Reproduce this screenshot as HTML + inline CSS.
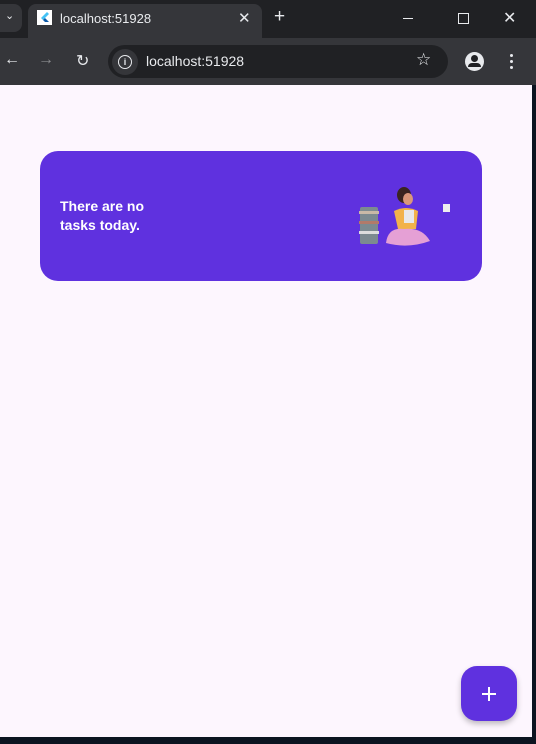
<!DOCTYPE html>
<html><head><style>
body{margin:0;width:536px;height:744px;background:#0c1420;position:relative;overflow:hidden;font-family:"Liberation Sans",sans-serif}
.tabbar{position:absolute;left:0;top:0;width:536px;height:38px;background:#202124}
.tab{position:absolute;left:28px;top:4px;width:234px;height:34px;background:#35363a;border-radius:8px 8px 0 0}
.toolbar{position:absolute;left:0;top:38px;width:536px;height:47px;background:#35363a}
.omni{position:absolute;left:108px;top:45px;width:340px;height:33px;background:#202124;border-radius:17px}
.page{position:absolute;left:0;top:85px;width:532px;height:652px;background:#fdf6fe}
.card{position:absolute;left:40px;top:151px;width:442px;height:130px;background:#5f31df;border-radius:18px}
.card p{position:absolute;left:20px;top:46px;margin:0;color:#fff;font-weight:bold;font-size:14px;line-height:19px}
.fab{position:absolute;left:461px;top:666px;width:56px;height:55px;background:#5f31df;border-radius:16px;box-shadow:0 3px 6px rgba(0,0,0,.25)}
.t{position:absolute;color:#e8eaed;font-size:13px}
</style></head><body>
<div class="tabbar"></div>
<div style="position:absolute;left:0;top:4px;width:22px;height:28px;background:#35363a;border-radius:0 8px 8px 0"></div>
<div class="t" style="left:5px;top:9px;font-size:11px">⌄</div>
<div class="tab"></div>
<div style="position:absolute;left:37px;top:10px;width:15px;height:15px;background:#fff"></div>
<svg style="position:absolute;left:38px;top:11px" width="13" height="13"><path d="M9 1 L3 7 L5 9 L11 3Z" fill="#44c2f5"/><path d="M5 9 L7 11 L11 11 L7 7Z" fill="#0d5aa7"/></svg>
<div class="t" style="left:60px;top:11px">localhost:51928</div>
<div class="t" style="left:238px;top:9px;font-size:15px">✕</div>
<div class="t" style="left:274px;top:6px;font-size:19px">+</div>
<div style="position:absolute;left:403px;top:18px;width:10px;height:1px;background:#e8eaed"></div>
<div style="position:absolute;left:458px;top:13px;width:9px;height:9px;border:1px solid #e8eaed"></div>
<div class="t" style="left:503px;top:8px;font-size:16px">✕</div>
<div class="toolbar"></div>
<div class="t" style="left:4px;top:51px;font-size:16px">←</div>
<div class="t" style="left:38px;top:51px;font-size:16px;color:#8a8b8e">→</div>
<div class="t" style="left:76px;top:51px;font-size:16px">↻</div>
<div class="omni"></div>
<div style="position:absolute;left:112px;top:49px;width:26px;height:26px;border-radius:13px;background:#35363a"></div>
<div style="position:absolute;left:118px;top:55px;width:12px;height:12px;border:1.5px solid #e8eaed;border-radius:50%;color:#e8eaed;font-size:9px;text-align:center;line-height:12px;font-weight:bold">i</div>
<div class="t" style="left:146px;top:53px;font-size:14px">localhost:51928</div>
<div class="t" style="left:416px;top:50px;font-size:17px">☆</div>
<div style="position:absolute;left:465px;top:52px;width:19px;height:19px;border-radius:50%;background:#e8eaed"></div>
<div style="position:absolute;left:471px;top:55px;width:7px;height:7px;border-radius:50%;background:#202124"></div>
<div style="position:absolute;left:468px;top:63px;width:13px;height:4px;border-radius:4px 4px 0 0;background:#202124"></div>
<div style="position:absolute;left:510px;top:54px;width:3px;height:3px;background:#e8eaed;border-radius:50%;box-shadow:0 6px 0 #e8eaed,0 12px 0 #e8eaed"></div>
<div class="page"></div>
<div class="card"><p>There are no<br>tasks today.</p>
<svg style="position:absolute;left:318px;top:30px" width="100" height="70">
<rect x="2" y="26" width="18" height="37" fill="#7c8a90" rx="2"/>
<rect x="1" y="30" width="20" height="3" fill="#c9b9a7"/><rect x="1" y="40" width="20" height="3" fill="#b27a6a"/><rect x="1" y="50" width="20" height="3" fill="#ddd"/>
<ellipse cx="46" cy="14" rx="7" ry="8" fill="#3a2420"/>
<ellipse cx="50" cy="18" rx="5" ry="6" fill="#d9977a"/>
<path d="M36 30 Q48 24 60 30 L58 48 L40 48Z" fill="#f2b24a"/>
<rect x="46" y="29" width="10" height="13" fill="#e8e8ea"/>
<path d="M28 62 Q30 46 46 48 Q64 46 72 60 Q50 68 28 62Z" fill="#e5a0d5"/>
<rect x="85" y="23" width="7" height="8" fill="#eee"/>
</svg></div>
<div class="fab"><div style="position:absolute;left:21px;top:27px;width:14px;height:2px;background:#fff"></div><div style="position:absolute;left:27px;top:21px;width:2px;height:14px;background:#fff"></div></div>
</body></html>
